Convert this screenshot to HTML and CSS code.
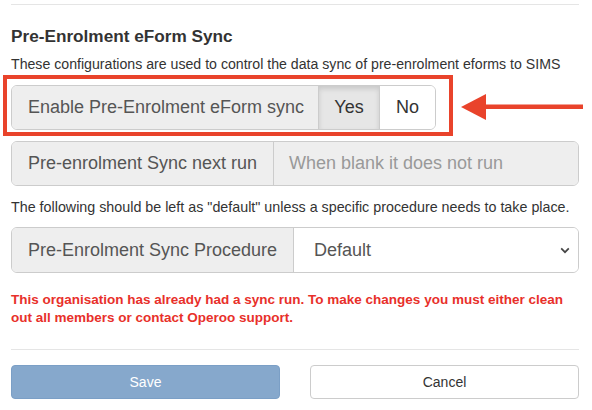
FILE: index.html
```html
<!DOCTYPE html>
<html>
<head>
<meta charset="utf-8">
<link rel="stylesheet" href="styles.css">
</head>
<body>
<div class="page">
  <hr class="rule rule-top">
  <h3 class="title">Pre-Enrolment eForm Sync</h3>
  <p class="desc">These configurations are used to control the data sync of pre-enrolment eforms to SIMS</p>

  <div class="highlight-row">
    <div class="group group-toggle">
      <span class="addon addon-toggle">Enable Pre-Enrolment eForm sync</span>
      <span class="opt opt-yes">Yes</span>
      <span class="opt opt-no">No</span>
    </div>
    <div class="highlight"></div>
    <svg class="arrow" width="124" height="26" viewBox="0 0 124 26">
      <polygon points="0,13 25,0 25,26" fill="#e9432b"/>
      <rect x="24" y="10.5" width="98" height="4.5" fill="#e9432b"/>
    </svg>
  </div>

  <div class="group group-full">
    <span class="addon addon-next">Pre-enrolment Sync next run</span>
    <span class="field field-disabled">When blank it does not run</span>
  </div>

  <p class="note">The following should be left as "default" unless a specific procedure needs to take place.</p>

  <div class="group group-full group-proc">
    <span class="addon addon-proc">Pre-Enrolment Sync Procedure</span>
    <span class="field field-select">Default
      <svg class="chev" width="10" height="7" viewBox="0 0 10 7"><path d="M1.2 1.4 L5 5.2 L8.8 1.4" fill="none" stroke="#444" stroke-width="1.7"/></svg>
    </span>
  </div>

  <p class="warn">This organisation has already had a sync run. To make changes you must either clean out all members or contact Operoo support.</p>

  <hr class="rule rule-bottom">

  <div class="actions">
    <button class="btn btn-save">Save</button>
    <button class="btn btn-cancel">Cancel</button>
  </div>
</div>
</body>
</html>
```

FILE: styles.css
```css
* { box-sizing: border-box; }
html, body { margin: 0; padding: 0; background: #fff; }
body {
  font-family: "Liberation Sans", Arial, Helvetica, sans-serif;
  color: #333;
}
.page {
  padding: 0 13px 0 11px;
  width: 592px;
}
.rule {
  border: 0;
  border-top: 1px solid #e5e5e5;
  margin: 0;
}
.rule-top { margin-top: 4px; }
.title {
  font-size: 17.2px;
  font-weight: bold;
  margin: 21px 0 0 0;
  line-height: 20px;
  color: #333;
}
.desc {
  font-size: 14.15px;
  line-height: 20px;
  margin: 8px 0 0 0;
  color: #333;
}
.highlight-row {
  position: relative;
  margin-top: 11px;
}
.highlight {
  position: absolute;
  left: -8px;
  top: -10px;
  width: 450px;
  height: 61px;
  border: 4.5px solid #e9432b;
  pointer-events: none;
}
.arrow {
  position: absolute;
  left: 450px;
  top: 9px;
}
.group {
  display: flex;
  height: 45px;
  border: 1px solid #ccc;
  border-radius: 6px;
  overflow: hidden;
  font-size: 18px;
}
.group-toggle { width: 425px; }
.group-full { width: 568px; margin-top: 11px; }
.group-proc { height: 46px; margin-top: 10px; }
.addon {
  display: flex;
  align-items: center;
  padding-left: 16px;
  background: #eee;
  color: #555;
  border-right: 1px solid #ccc;
  flex: none;
}
.addon-toggle { width: 307px; }
.addon-next { width: 262px; }
.addon-proc { width: 282px; }
.opt {
  display: flex;
  align-items: center;
  justify-content: center;
  flex: none;
  color: #333;
}
.opt-yes {
  width: 61px;
  background: #e6e6e6;
  border-right: 1px solid #ccc;
  box-shadow: inset 0 3px 5px rgba(0,0,0,0.125);
}
.opt-no { flex: 1; background: #fff; }
.field {
  flex: 1;
  display: flex;
  align-items: center;
  padding-left: 15px;
}
.field-disabled { background: #eee; color: #999; }
.field-select { background: #fff; color: #555; padding-left: 20px; position: relative; }
.chev { position: absolute; right: 8px; top: 19px; }
.note {
  font-size: 14.3px;
  line-height: 20px;
  margin: 11px 0 0 0;
  color: #333;
}
.warn {
  font-size: 13.5px;
  line-height: 18px;
  margin: 18px 0 0 0;
  color: #e8302a;
  font-weight: bold;
}
.rule-bottom { margin-top: 22px; }
.actions {
  display: flex;
  justify-content: space-between;
  margin-top: 15px;
}
.btn {
  width: 269px;
  height: 34px;
  border-radius: 4px;
  font-family: "Liberation Sans", Arial, sans-serif;
  font-size: 14px;
  padding: 0;
}
.btn-save {
  background: #86a8cc;
  border: 1px solid #7b9fc6;
  color: #fff;
}
.btn-cancel {
  background: #fff;
  border: 1px solid #ccc;
  color: #333;
}
```
